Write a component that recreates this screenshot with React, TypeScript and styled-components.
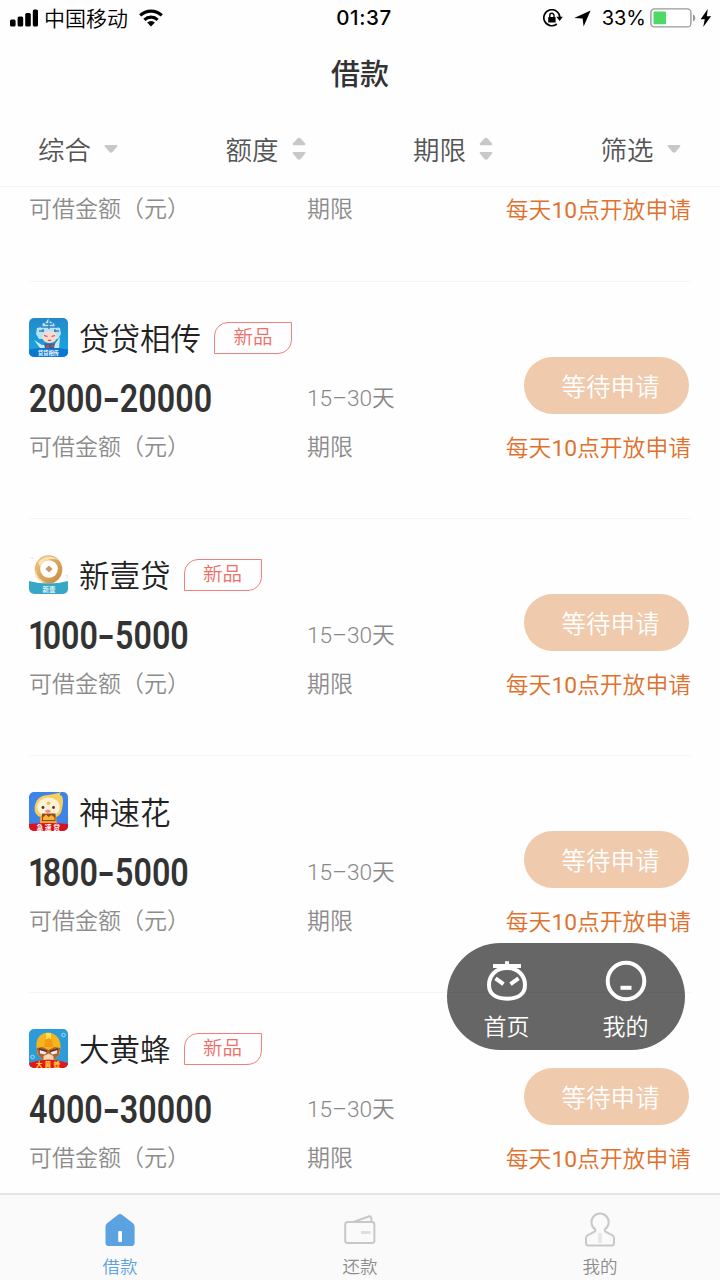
import React from 'react'
import styled, {createGlobalStyle} from 'styled-components'

type LogoKind = 'opera' | 'coin' | 'baby' | 'bee'
type ArrowKind = 'down' | 'both'

interface Loan {
  name: string
  logo: LogoKind
  min: number
  max: number
  isNew: boolean
}

const loans: Loan[] = [
  {name: '贷贷相传', logo: 'opera', min: 2000, max: 20000, isNew: true},
  {name: '新壹贷', logo: 'coin', min: 1000, max: 5000, isNew: true},
  {name: '神速花', logo: 'baby', min: 1800, max: 5000, isNew: false},
  {name: '大黄蜂', logo: 'bee', min: 4000, max: 30000, isNew: true}
]

const filters: {label: string; arrow: ArrowKind}[] = [
  {label: '综合', arrow: 'down'},
  {label: '额度', arrow: 'both'},
  {label: '期限', arrow: 'both'},
  {label: '筛选', arrow: 'down'}
]

export default function App() {
  return (
    <Page>
      <GlobalStyle />
      <StatusBar />
      <Title>借款</Title>
      <FilterBar>
        {filters.map(filter => (
          <FilterButton key={filter.label}>
            {filter.label}
            <SortArrow kind={filter.arrow} />
          </FilterButton>
        ))}
      </FilterBar>
      <LoanList>
        <ScrolledItem>
          <AmountColumn>
            <Label>可借金额（元）</Label>
          </AmountColumn>
          <TermColumn>
            <Label>期限</Label>
          </TermColumn>
          <ActionColumn>
            <OpenNote>
              每天<b>10</b>点开放申请
            </OpenNote>
          </ActionColumn>
        </ScrolledItem>
        {loans.map(loan => (
          <LoanItem key={loan.name} loan={loan} />
        ))}
      </LoanList>
      <FloatMenu>
        <FloatButton>
          <HomeFace />
          首页
        </FloatButton>
        <FloatButton>
          <MineFace />
          我的
        </FloatButton>
      </FloatMenu>
      <TabBar>
        <Tab $active>
          <HouseIcon />
          借款
        </Tab>
        <Tab>
          <WalletIcon />
          还款
        </Tab>
        <Tab>
          <PersonIcon />
          我的
        </Tab>
      </TabBar>
    </Page>
  )
}

function LoanItem({loan}: {loan: Loan}) {
  return (
    <Item>
      <ItemHead>
        <Logo kind={loan.logo} />
        <LoanName>{loan.name}</LoanName>
        {loan.isNew && <NewBadge>新品</NewBadge>}
      </ItemHead>
      <ItemBody>
        <AmountColumn>
          <Amount $leadingOne={String(loan.min).startsWith('1')}>
            {loan.min}
            <Dash>-</Dash>
            {loan.max}
          </Amount>
          <Label>可借金额（元）</Label>
        </AmountColumn>
        <TermColumn>
          <Term>15–30天</Term>
          <Label>期限</Label>
        </TermColumn>
        <ActionColumn>
          <ApplyButton>等待申请</ApplyButton>
          <OpenNote>
            每天<b>10</b>点开放申请
          </OpenNote>
        </ActionColumn>
      </ItemBody>
    </Item>
  )
}

function StatusBar() {
  return (
    <StatusRow>
      <StatusLeft>
        <svg width='28' height='18' viewBox='0 0 28 18'>
          <rect x='0' y='10.5' width='5.6' height='7' rx='1.6' />
          <rect x='7.6' y='7.5' width='5.6' height='10' rx='1.6' />
          <rect x='15.2' y='4' width='5.6' height='13.5' rx='1.6' />
          <rect x='22.8' y='0.5' width='5.2' height='17' rx='1.6' />
        </svg>
        <Carrier>中国移动</Carrier>
        <svg width='24' height='18' viewBox='0 0 24 18'>
          <g fill='none' stroke='#000' strokeWidth='3.2'>
            <path d='M1.2 6.4a15.6 15.6 0 0 1 21.6 0' />
            <path d='M5.4 10.8a9.6 9.6 0 0 1 13.2 0' />
          </g>
          <path d='M12 17.4l-3.9-3.8a5.6 5.6 0 0 1 7.8 0z' />
        </svg>
      </StatusLeft>
      <Clock>01:37</Clock>
      <StatusRight>
        <svg width='20' height='18' viewBox='0 0 20 18'>
          <path d='M13.8 15A8 8 0 1 1 16.8 8' fill='none' stroke='#000' strokeWidth='1.7' />
          <path d='M13.4 7.8h6.4l-3.2 4.1z' />
          <rect x='5.2' y='8' width='7.4' height='5.6' rx='0.6' />
          <path d='M6.8 8V6.4a2.1 2.1 0 0 1 4.2 0V8' fill='none' stroke='#000' strokeWidth='1.4' />
        </svg>
        <svg width='17' height='17' viewBox='0 0 17 17'>
          <path d='M16.6 0.4L9.6 16.6 8.6 8.6 0.2 8z' />
        </svg>
        <Percent>33%</Percent>
        <svg width='46' height='20' viewBox='0 0 46 20'>
          <rect x='0.9' y='0.9' width='40' height='18' rx='3.5' fill='#fff' stroke='#999' strokeWidth='1.4' />
          <rect x='3.5' y='3.5' width='12.5' height='12.8' rx='1' fill='#4cd964' />
          <path d='M43 6.5c3 1.2 3 5.8 0 7z' fill='#999' />
        </svg>
        <svg width='12' height='18' viewBox='0 0 12 18'>
          <path d='M7.8 0L0.6 10.2h4.2L3.2 18l7.9-10.8H6.8z' />
        </svg>
      </StatusRight>
    </StatusRow>
  )
}

function SortArrow({kind}: {kind: ArrowKind}) {
  if (kind === 'down') {
    return (
      <svg width='14' height='24' viewBox='0 0 14 24'>
        <path d='M1.6 8h10.8q1.6.2.8 1.6L8.6 15q-1.6 1.6-3.2 0L.8 9.6Q0 8.2 1.6 8z' fill='#c8c8c8' />
      </svg>
    )
  }
  return (
    <svg width='14' height='24' viewBox='0 0 14 24'>
      <path d='M1.6 8.2h10.8q1.6-.2.8-1.6L8.6 1.6q-1.6-1.6-3.2 0L.8 6.6Q0 8 1.6 8.2z' fill='#c8c8c8' />
      <path d='M1.6 15h10.8q1.6.2.8 1.6L8.6 22q-1.6 1.6-3.2 0L.8 16.6Q0 15.2 1.6 15z' fill='#c8c8c8' />
    </svg>
  )
}

function Logo({kind}: {kind: LogoKind}) {
  if (kind === 'opera') {
    return (
      <LogoSvg viewBox='0 0 39 39'>
        <defs>
          <linearGradient id='operaBg' x2='0' y2='1'>
            <stop stopColor='#2589c9' />
            <stop offset='1' stopColor='#16a9e6' />
          </linearGradient>
        </defs>
        <rect width='39' height='39' rx='5' fill='url(#operaBg)' />
        <path d='M0 31.5q19.5-4 39 0V34a5 5 0 0 1-5 5H5a5 5 0 0 1-5-5z' fill='#0a78d0' />
        <path d='M8 10l5-1 1-4 3-1 2-3 3 3 3 1 1 4 5 1 1 6-3 5H10l-3-5z' fill='#b6e3f5' />
        <path
          d='M14 3l3 3h6l3-3M12 9h16M10 13h5m10 0h5M20 2v9M14 11v3m12-3v3'
          stroke='#2f83c0'
          strokeWidth='1.3'
          fill='none'
        />
        <path d='M5 22l8 5 13-1 5-7-1 11H11z' fill='#cfe9f6' />
        <ellipse cx='20.5' cy='19' rx='7.5' ry='6' fill='#fbd9cf' />
        <path d='M15 17.5l3.5 1m4 0l3.5-1M19 22q2 1 3 0' stroke='#b55354' strokeWidth='1.2' fill='none' />
        <path d='M15 25.5h11l-1 5h-9z' fill='#2667a8' />
        <path d='M17.5 27h2.5v3h-2.5zM22 27h3v2h-3z' fill='#d4434b' />
        <LogoText x='19.5' y='36.9' fontSize='5.2' fill='#fff' fontWeight='700'>
          贷贷相传
        </LogoText>
      </LogoSvg>
    )
  }
  if (kind === 'coin') {
    return (
      <LogoSvg viewBox='0 0 39 39'>
        <defs>
          <linearGradient id='gold' x2='1' y2='1'>
            <stop stopColor='#f5c47b' />
            <stop offset='1' stopColor='#c38a3f' />
          </linearGradient>
        </defs>
        <ellipse cx='19.5' cy='14.5' rx='13.8' ry='14.3' fill='url(#gold)' />
        <path d='M9 7Q18-3 30 5Q17 1 11 12zM7 14q0 10 11 14-15-2-11-14z' fill='#fae0b6' />
        <path d='M0 26q19.5 5 39 0v8a5 5 0 0 1-5 5H5a5 5 0 0 1-5-5z' fill='#36a7c6' />
        <circle cx='20' cy='14' r='8.8' fill='#fff' />
        <path d='M20 10.4l3.6 3.6-3.6 3.6-3.6-3.6z' fill='#c99c60' />
        <path d='M1 4q1-3 4 0M36 20l3 1-2 2' stroke='#e5e5e5' fill='none' />
        <LogoText x='20' y='36.8' fontSize='6.5' fill='#fff' fontWeight='500'>
          新壹
        </LogoText>
      </LogoSvg>
    )
  }
  if (kind === 'baby') {
    return (
      <LogoSvg viewBox='0 0 39 39'>
        <rect width='39' height='39' rx='5' fill='#3f83e8' />
        <path d='M6 13Q8 4 18 3q9-1 14-3-3 3 1 4 2 5 0 13-1 9-13 10Q3 26 6 13z' fill='#f5d060' />
        <ellipse cx='19.5' cy='15' rx='11.2' ry='9.5' fill='#fff0d8' />
        <circle cx='14' cy='15.5' r='1.4' fill='#493330' />
        <circle cx='24.5' cy='15.5' r='1.4' fill='#493330' />
        <circle cx='19.5' cy='11.2' r='1.7' fill='#f5b83c' />
        <ellipse cx='19' cy='19.3' rx='2.8' ry='1.7' fill='#ef8e88' />
        <path d='M11 24q8-3 16 0l1 9H11z' fill='#f0a53a' />
        <path d='M13 21.5h13.5V29H13z' fill='#8f4c16' />
        <path d='M14 25.5l3-3 2.5 2.5 3-2 3 2.5V28H14z' fill='#ffb338' />
        <path d='M0 32q19.5-2 39 0v2a5 5 0 0 1-5 5H5a5 5 0 0 1-5-5z' fill='#d9121c' />
        <LogoText x='20' y='37.6' fontSize='6.8' letterSpacing='1.6' fill='#fff' fontWeight='700'>
          急速贷
        </LogoText>
      </LogoSvg>
    )
  }
  return (
    <LogoSvg viewBox='0 0 39 39'>
      <rect width='39' height='39' rx='5' fill='#2d9bd8' />
      <path d='M7.5 19Q6 5 19 3.5 32 5 31.5 19l-1 6-6 7h-10l-6-7z' fill='#f6b51e' />
      <path d='M17 4h5v10h-5z' fill='#ffe052' />
      <path d='M16 11l3.5-2 3.5 2 1 7h-9z' fill='#f39b13' />
      <path d='M7.5 19l6-1 6 3 6-3 6 1-2 7-4.500 5H14l-4.500-5z' fill='#b0602b' />
      <path d='M11 20.5l7 2-2 3-5-1zM28 20.5l-7 2 2 3 5-1z' fill='#e9edf5' />
      <path d='M10 20l8 2.5M29 20l-8 2.5' stroke='#5a2e25' strokeWidth='1.4' />
      <path d='M14.5 27l5-2.5 5 2.5v4h-10z' fill='#f8d5b4' />
      <circle cx='34.5' cy='6' r='1.8' fill='none' stroke='#a4d9f5' />
      <circle cx='3.5' cy='28' r='1.8' fill='none' stroke='#a4d9f5' />
      <path d='M0 34q19.5-7 39 0a5 5 0 0 1-5 5H5a5 5 0 0 1-5-5z' fill='#e4161b' />
      <LogoText x='20' y='37.6' fontSize='6.8' letterSpacing='2' fill='#ffd83a' fontWeight='700'>
        大黄蜂
      </LogoText>
    </LogoSvg>
  )
}

function HomeFace() {
  return (
    <svg width='42' height='42' viewBox='0 0 42 42' fill='none' stroke='#fff' strokeWidth='4'>
      <path d='M7 6h28M21 1.2v5' />
      <path d='M21 8C10.5 8 3 15 3 25c0 8.500 6 13.700 18 13.700S39 33.500 39 25C39 15 31.500 8 21 8z' />
      <path d='M9.5 18.3l8 5.8M32.5 18.3l-8 5.8' />
    </svg>
  )
}

function MineFace() {
  return (
    <svg width='42' height='42' viewBox='0 0 42 42' fill='none' stroke='#fff' strokeWidth='4'>
      <circle cx='21' cy='21' r='18.3' />
      <path d='M15.5 27.8h11' />
    </svg>
  )
}

function HouseIcon() {
  return (
    <svg width='36' height='36' viewBox='0 0 36 36'>
      <path
        d='M16 2.8q2-1.6 4 0l11 8.4q1.6 1.3 1.6 3.2V31q0 3-3 3H6.5q-3 0-3-3V14.4q0-1.9 1.6-3.2z'
        fill='#5ba3e0'
      />
      <rect x='16.2' y='19' width='3.8' height='11' rx='1' fill='#fff' />
    </svg>
  )
}

function WalletIcon() {
  return (
    <svg width='36' height='36' viewBox='0 0 36 36' fill='none' stroke='#c8c8c8' strokeWidth='2'>
      <rect x='3.2' y='10' width='29.2' height='21' rx='2.5' />
      <path d='M12 9.8L27.5 4.3q1.5-.3 1.7 1.2l.3 4.5' />
      <path d='M19 20.5h9.5' stroke='#dedede' strokeWidth='3' />
    </svg>
  )
}

function PersonIcon() {
  return (
    <svg width='36' height='36' viewBox='0 0 36 36' fill='none' stroke='#c8c8c8' strokeWidth='2'>
      <path d='M13.3 17.3a8.6 8.6 0 1 1 9.5 0q-.6 1.5.7 2.3l7 3.8q1.5.9 1.500 2.600V31q0 2.600-2.500 2.600h-23Q4 33.600 4 31v-5q0-1.700 1.500-2.600l7-3.800q1.400-.8.800-2.300z' />
      <path d='M18 21v10' stroke='#e6e6e6' strokeWidth='3.5' />
    </svg>
  )
}

const GlobalStyle = createGlobalStyle`
  * {
    box-sizing: border-box;
  }

  body {
    margin: 0;
    background: #fefefe;
    font-family: 'Noto Sans CJK SC', sans-serif;
    font-weight: 350;
  }

  button {
    border: none;
    padding: 0;
    background: none;
    font-family: inherit;
    font-weight: inherit;
    cursor: pointer;
  }
`

const Page = styled.div`
  position: relative;
  width: 720px;
  height: 1280px;
  display: flex;
  flex-direction: column;
  overflow: hidden;
`

const StatusRow = styled.div`
  display: grid;
  grid-template-columns: 1fr auto 1fr;
  align-items: center;
  height: 36px;
  padding: 0 8px 0 10px;
  color: #000;
`

const StatusLeft = styled.div`
  display: flex;
  align-items: center;
`

const Carrier = styled.span`
  margin: 0 11px 0 6px;
  font-size: 21px;
  line-height: 34px;
  padding-bottom: 2px;
`

const Clock = styled.span`
  margin-left: 6px;
  font-family: Inter, sans-serif;
  font-size: 20.5px;
  line-height: 36px;
  font-weight: 500;
  letter-spacing: 0.6px;
`

const StatusRight = styled.div`
  display: flex;
  align-items: center;
  justify-content: flex-end;

  svg + svg {
    margin-left: 11px;
  }

  svg:last-child {
    margin-left: 4px;
  }
`

const Percent = styled.span`
  margin: 0 4px 0 11px;
  font-family: Inter, sans-serif;
  font-size: 20px;
  line-height: 36px;
  font-weight: 400;
`

const Title = styled.h1`
  margin: 0;
  height: 75px;
  line-height: 73px;
  text-align: center;
  font-size: 29px;
  font-weight: 500;
  color: #333;
`

const FilterBar = styled.div`
  display: grid;
  grid-template-columns: repeat(4, 187.5px);
  height: 76px;
  padding-left: 38px;
  border-bottom: 1px solid #f4f4f4;
`

const FilterButton = styled.button`
  display: flex;
  align-items: center;
  gap: 13px;
  padding-bottom: 1px;
  font-size: 26.5px;
  color: #555;

  svg {
    margin-top: 1px;
  }
`

const LoanList = styled.main`
  flex: 1;
  overflow: hidden;
`

const Item = styled.section`
  height: 237px;
  margin: 0 29px;
  padding-top: 36px;
  border-bottom: 1px solid #f5f5f5;
`

const ItemHead = styled.div`
  display: flex;
  align-items: center;
  height: 39px;
`

const LogoSvg = styled.svg`
  width: 39px;
  height: 39px;
  flex: none;
`

const LogoText = styled.text`
  text-anchor: middle;
`

const LoanName = styled.h2`
  margin: 0 13px 0 11px;
  font-size: 30.5px;
  line-height: 39px;
  font-weight: 350;
  color: #222;
`

const NewBadge = styled.span`
  width: 78px;
  height: 32px;
  line-height: 26px;
  text-align: center;
  border: 1.5px solid #f0807c;
  border-radius: 14px 0;
  font-size: 19.5px;
  color: #ee6e6a;
`

const ItemBody = styled.div`
  display: flex;
`

const ScrolledItem = styled.section`
  display: flex;
  height: 95px;
  margin: 0 29px;
  padding-top: 7px;
  border-bottom: 1px solid #f5f5f5;
`

const AmountColumn = styled.div`
  width: 278px;
`

const TermColumn = styled.div`
  flex: 1;
`

const ActionColumn = styled.div`
  display: flex;
  flex-direction: column;
  align-items: flex-end;
`

const Amount = styled.div<{$leadingOne: boolean}>`
  height: 50px;
  margin: 17px 0 8px ${props => (props.$leadingOne ? '-1px' : '0')};
  line-height: 50px;
  font-family: Roboto, sans-serif;
  font-size: 38px;
  font-weight: 600;
  color: #333;
  white-space: nowrap;
  transform: scaleX(0.85);
  transform-origin: left;

  &::first-letter {
    letter-spacing: ${props => (props.$leadingOne ? '-4.5px' : '0')};
  }
`

const Dash = styled.span`
  display: inline-block;
  width: 20px;
  text-align: center;
  transform: scaleX(1.5);
`

const Term = styled.div`
  height: 50px;
  margin: 16px 0 9px;
  line-height: 51px;
  font-family: Roboto, 'Noto Sans CJK SC', sans-serif;
  font-size: 22.7px;
  color: #888;
`

const Label = styled.div`
  height: 30px;
  line-height: 26px;
  font-size: 23px;
  color: #8c8c8c;
`

const ApplyButton = styled.button`
  width: 165px;
  height: 57px;
  margin: 0 2px 18px 0;
  padding: 0 0 1px 8px;
  border-radius: 29px;
  background: #efcaac;
  font-size: 24.5px;
  color: #fff;
`

const OpenNote = styled.div`
  height: 30px;
  line-height: 33px;
  font-family: Roboto, 'Noto Sans CJK SC', sans-serif;
  font-size: 22.8px;
  color: #e0712c;

  b {
    font-weight: 400;
  }
`

const FloatMenu = styled.nav`
  position: absolute;
  left: 447px;
  top: 943px;
  width: 238px;
  height: 107px;
  display: grid;
  grid-template-columns: 1fr 1fr;
  border-radius: 54px;
  background: rgb(0 0 0 / 60%);
`

const FloatButton = styled.button`
  display: flex;
  flex-direction: column;
  align-items: center;
  padding-top: 17px;
  font-size: 23px;
  line-height: 47px;
  color: #fff;
`

const TabBar = styled.nav`
  display: grid;
  grid-template-columns: repeat(3, 1fr);
  height: 87px;
  border-top: 2px solid #e6e6e6;
  background: #fafafa;
`

const Tab = styled.button<{$active?: boolean}>`
  display: flex;
  flex-direction: column;
  align-items: center;
  padding-top: 17px;
  font-size: 17.5px;
  line-height: 36px;
  color: ${props => (props.$active ? '#5ba3e0' : '#8c8c8c')};
`
